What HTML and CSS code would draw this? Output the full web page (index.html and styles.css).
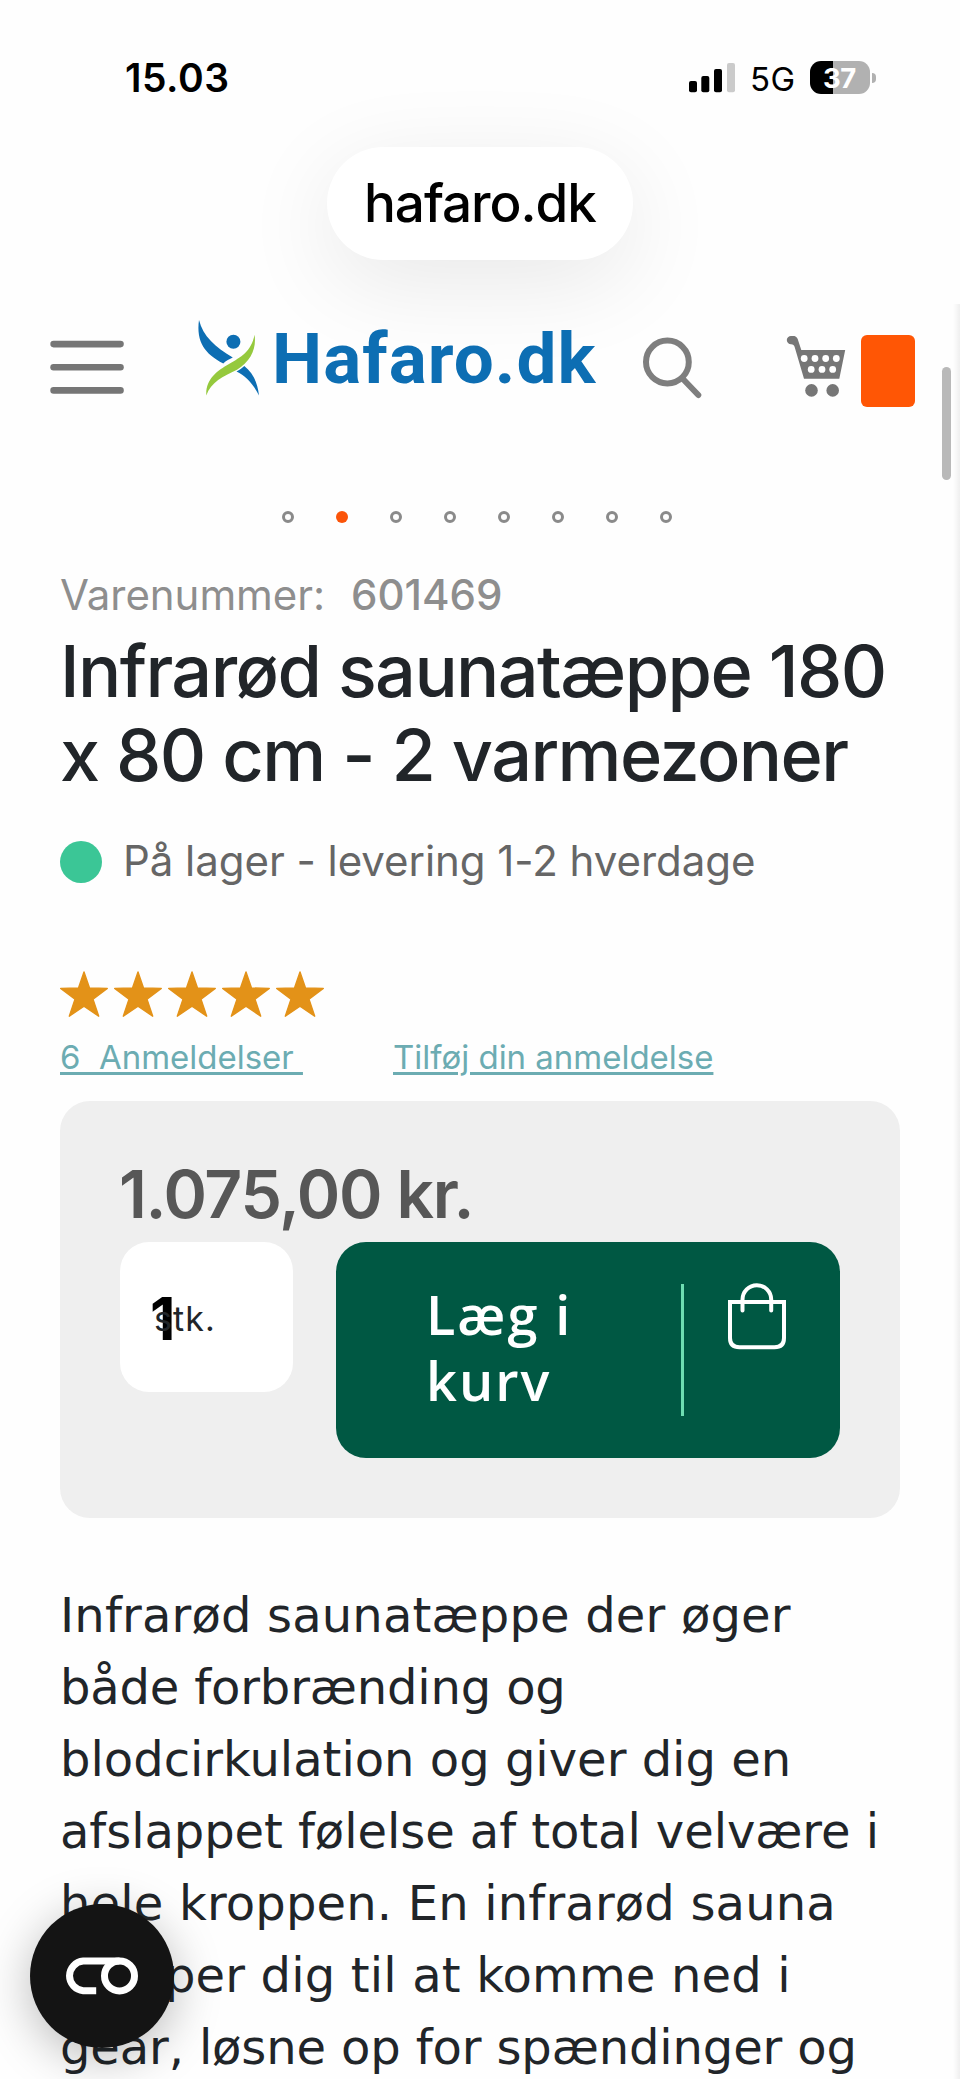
FILE: index.html
```html
<!DOCTYPE html>
<html lang="da">
<head>
<meta charset="utf-8">
<title>Infrarød saunatæppe 180 x 80 cm - 2 varmezoner</title>
<link rel="stylesheet" href="styles.css">
</head>
<body>
<div class="screen">
  <div class="status">
    <span class="time">15.03</span>
    <svg class="signal" viewBox="689 62 46 31" width="46" height="31">
      <rect x="689" y="81" width="8" height="11.2" rx="2"/>
      <rect x="701.3" y="76" width="8" height="16.2" rx="2"/>
      <rect x="714" y="69" width="8" height="23.2" rx="2"/>
      <rect x="727" y="63" width="8" height="29.2" rx="2" fill="#cbcbcb"/>
    </svg>
    <span class="network">5G</span>
    <span class="battery">37</span>
    <span class="battery-tip"></span>
  </div>

  <div class="address">hafaro.dk</div>

  <header class="header">
    <svg class="menu" viewBox="50 310 74 96" width="74" height="96">
      <g fill="#767676"><rect x="50.3" y="340.8" width="73.5" height="6.6" rx="3.3"/><rect x="50.3" y="364" width="73.5" height="6.6" rx="3.3"/><rect x="50.3" y="387" width="73.5" height="6.8" rx="3.3"/></g>
    </svg>
    <a class="logo">
      <svg viewBox="196 310 66 96" width="66" height="96">
        <g fill="#0d6eb3">
          <path d="M199 320 C203 336 215 347 232.8 357.6 C229.500 359 226 361 223.300 363.500 C205 354 196 342 199 320Z"/>
          <path d="M244.300 366 C253 373 257.500 382 259 395.500 C254 385 246 376 236.500 371.500 C239.500 370 242 368.300 244.300 366Z"/>
          <circle cx="233.400" cy="341.700" r="7"/>
        </g>
        <path fill="#95c93d" d="M254.600 334.800 C256.500 349 251 361 237 369.800 C223 376.500 211 382 206.300 395.500 C205.500 379 217 371 229 364 C241 357 251 352 254.600 334.800Z"/>
      </svg>
      <span class="logo-text">Hafaro.dk</span>
    </a>
    <svg class="search" viewBox="642 310 60 96" width="60" height="96">
      <circle cx="667.400" cy="362" r="21.400" fill="none" stroke="#7e7e7e" stroke-width="6"/>
      <path d="M682.500 378.500 L698.300 395" stroke="#7e7e7e" stroke-width="6" stroke-linecap="round"/>
    </svg>
    <svg class="cart" viewBox="784 310 62 96" width="62" height="96">
      <g fill="#767676">
        <path d="M791 335.900 H794.500 Q796.600 336.300 797.600 338.700 L801.300 350 H845.200 L839.300 378.700 H804 L794.800 347.500 Q794 344.300 791 344.300 A4.200 4.200 0 0 1 791 335.900Z"/>
        <circle cx="811.500" cy="390.400" r="6.300"/><circle cx="832.700" cy="390.400" r="6.300"/>
      </g>
      <g fill="#fff">
        <circle cx="804.200" cy="358.500" r="3.400"/><circle cx="815" cy="358.500" r="3.400"/><circle cx="825.700" cy="358.500" r="3.400"/><circle cx="836.300" cy="358.500" r="3.400"/>
        <circle cx="811.200" cy="369.400" r="3.400"/><circle cx="822" cy="369.400" r="3.400"/><circle cx="832.700" cy="369.400" r="3.400"/>
      </g>
    </svg>
    <span class="cart-count"></span>
  </header>

  <nav class="dots">
    <i class="dot"></i><i class="dot active"></i><i class="dot"></i><i class="dot"></i><i class="dot"></i><i class="dot"></i><i class="dot"></i><i class="dot"></i>
  </nav>

  <main class="product">
    <div class="sku"><span class="sku-label">Varenummer:</span><span class="sku-value">601469</span></div>
    <h1 class="title">Infrarød saunatæppe 180<br>x 80 cm - 2 varmezoner</h1>
    <div class="stock"><span class="stock-dot"></span><span class="stock-text">På lager - levering 1-2 hverdage</span></div>
    <svg class="stars" viewBox="0 0 264 46" width="264" height="46">
      <defs><path id="star" d="M24 1 L29.500 17 L47.300 17.400 L33 28.200 L38.700 45.200 L24 35.200 L9.300 45.200 L15 28.200 L.7 17.400 L18.500 17Z"/></defs>
      <g fill="#e39218" stroke="#e39218" stroke-width="1.400" stroke-linejoin="round"><use href="#star"/><use href="#star" x="54"/><use href="#star" x="108"/><use href="#star" x="162"/><use href="#star" x="216"/></g>
    </svg>
    <div class="reviews"><div class="review-count"><a class="link">6&nbsp; Anmeldelser&nbsp;</a></div><a class="link">Tilføj din anmeldelse</a></div>

    <section class="buy">
      <div class="price">1.075,00 kr.</div>
      <div class="buy-row">
        <div class="qty"><span class="qty-value">1</span><span class="qty-unit">stk.</span></div>
        <button class="add">
          <span class="add-text">Læg i<br>kurv</span>
          <span class="add-divider"></span>
          <svg class="bag" viewBox="726 1281 64 70" width="64" height="70">
            <g fill="none" stroke="#fff" stroke-width="4">
              <path d="M730 1302 H784 V1338 Q784 1347.300 774.500 1347.300 H739.500 Q730 1347.300 730 1338Z"/>
              <path d="M742.500 1310.500 V1299.500 A14.300 14.300 0 0 1 771.200 1299.500 V1310.500" stroke-linecap="round"/>
            </g>
          </svg>
        </button>
      </div>
    </section>

    <p class="description">
      <span class="line wide">Infrarød saunatæppe der øger</span>
      <span class="line tightest">både forbrænding og</span>
      <span class="line">blodcirkulation og giver dig en</span>
      <span class="line tight">afslappet følelse af total velvære i</span>
      <span class="line wide">hele kroppen. En infrarød sauna</span>
      <span class="line wide">hjælper dig til at komme ned i</span>
      <span class="line tighter">gear, løsne op for spændinger og</span>
    </p>
  </main>

  <div class="page-edge"></div>
  <div class="scrollbar"></div>
  <button class="consent">
    <svg viewBox="60 1950 86 52" width="86" height="52">
      <g fill="none" stroke="#fff" stroke-width="7">
        <path d="M97.200 1990.700 H84.200 A14.900 14.900 0 0 1 84.200 1961 H120.500"/>
        <circle cx="120.500" cy="1975.900" r="15"/>
      </g>
    </svg>
  </button>
</div>
</body>
</html>
```

FILE: styles.css
```css
* { box-sizing: border-box; }
body { margin: 0; background: #fefefe; font-family: Inter, "Liberation Sans", sans-serif; color: #212529; }
svg { display: block; flex: none; }
button { border: 0; padding: 0; font: inherit; text-align: left; }
.screen { position: relative; width: 960px; height: 2079px; overflow: hidden; }

.status { display: flex; height: 147px; padding: 58px 0 0 125px; color: #000; }
.time { width: 564px; font-size: 39px; font-weight: 600; line-height: 40px; letter-spacing: .5px; }
.signal { margin-top: 4px; }
.network { width: 60px; margin-left: 15px; padding-top: 1px; font-size: 33px; line-height: 40px; letter-spacing: .5px; }
.battery { width: 60px; height: 33px; margin-top: 3px; padding-left: 13px; border-radius: 11px; background: linear-gradient(90deg, #000 23px, #b1b1b1 23px); color: #fff; font-size: 27.500px; font-weight: 700; line-height: 34px; letter-spacing: -.5px; }
.battery-tip { width: 4px; height: 10px; margin: 15px 0 0 2px; border-radius: 0 5px 5px 0; background: #b1b1b1; }

.address { width: 306px; height: 113px; margin-left: 327px; padding-left: 37px; border-radius: 57px; background: #fff; box-shadow: 0 22px 95px rgba(0, 0, 0, .09); color: #000; font-size: 53px; font-weight: 500; line-height: 112px; letter-spacing: -1.050px; }

.header { position: relative; display: flex; height: 160px; padding: 50px 0 0 50px; }
.logo { display: flex; width: 446px; margin-left: 72px; }
.logo-text { margin-left: 10px; padding-top: 1px; color: #0d6eb3; font: 700 71px/96px Roboto, sans-serif; letter-spacing: 1.050px; white-space: nowrap; }
.cart { margin-left: 82px; }
.cart-count { width: 54px; height: 72px; margin: 25px 0 0 15px; border-radius: 6px; background: #ff5605; }

.dots { display: flex; gap: 42px; padding: 91px 0 0 282px; }
.dot { width: 12px; height: 12px; border: 3px solid #8a8a8a; border-radius: 50%; }
.dot.active { border: 0; background: #fb5409; }

.product { padding: 47px 60px 0; }
.sku { display: flex; color: #8e8e8e; font-size: 42px; line-height: 50px; }
.sku-label { width: 291px; letter-spacing: -.050px; }
.sku-value { font-weight: 500; }
.title { margin: 9px 0 0; font-size: 72px; font-weight: 500; line-height: 84px; letter-spacing: -1.600px; white-space: nowrap; }
.stock { display: flex; align-items: flex-start; height: 50px; margin-top: 40px; color: #666; }
.stock-dot { width: 42px; height: 42px; margin-top: 4px; border-radius: 50%; background: #3bc696; }
.stock-text { margin-left: 21px; font-size: 42px; line-height: 47px; letter-spacing: -.040px; }
.stars { margin-top: 84px; }
.reviews { display: flex; margin-top: 20px; font-size: 33px; line-height: 40px; letter-spacing: -.020px; }
.review-count { width: 333px; }
.link { color: #6cacb2; text-decoration: underline; text-decoration-thickness: 3px; text-underline-offset: 3px; }

.buy { height: 417px; margin-top: 24px; padding: 53px 60px 0; border-radius: 30px; background: #efefef; }
.price { margin-left: -1px; color: #575757; font-size: 66px; font-weight: 600; line-height: 80px; letter-spacing: -1.340px; }
.buy-row { display: flex; align-items: flex-start; gap: 43px; margin-top: 8px; }
.qty { display: grid; width: 173px; height: 150px; align-items: start; border-radius: 29px; background: #fff; }
.qty > span { grid-area: 1 / 1; }
.qty-value { padding: 47px 0 0 30px; color: #000; font-size: 59px; font-weight: 700; line-height: 60px; }
.qty-unit { padding: 57px 0 0 34px; font-size: 34px; line-height: 40px; letter-spacing: 1.100px; }
.add { display: flex; align-items: flex-start; width: 504px; height: 216px; padding: 39px 0 0 90px; border-radius: 30px; background: #005843; color: #fff; }
.add-text { width: 255px; font: 600 54px/66px "Open Sans", sans-serif; letter-spacing: 2px; }
.add-divider { width: 3px; height: 132px; margin-top: 3px; background: #6fddb2; }
.bag { margin-left: 42px; }

.description { margin: 61px 0 0; font: 48px/72px "DejaVu Sans", sans-serif; white-space: nowrap; }
.line { display: block; }
.line.wide { letter-spacing: .170px; }
.line.tight { letter-spacing: -.060px; }
.line.tighter { letter-spacing: -.130px; }
.line.tightest { letter-spacing: -.160px; }

.page-edge { position: absolute; top: 304px; right: 0; bottom: 0; width: 7px; background: linear-gradient(90deg, rgba(0, 0, 0, 0), rgba(0, 0, 0, .06)); }
.scrollbar { position: absolute; top: 367px; right: 9px; width: 9px; height: 113px; border-radius: 5px; background: #b9b9b9; }
.consent { position: absolute; left: 30px; top: 1904px; display: grid; place-items: center; width: 144px; height: 144px; border-radius: 50%; background: #141414; box-shadow: 0 10px 48px rgba(0, 0, 0, .27); }
```
